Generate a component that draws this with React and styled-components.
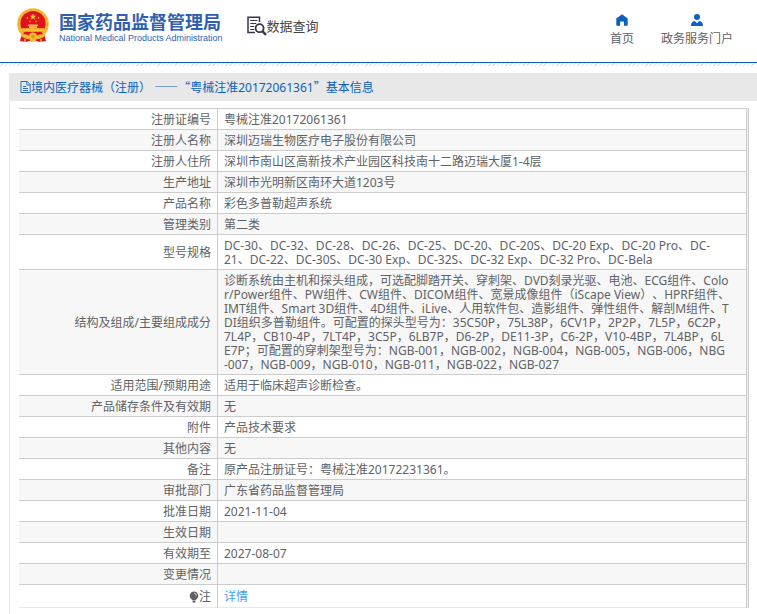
import React from "react";
import styled, { createGlobalStyle } from "styled-components";

const details = [
  { label: "注册证编号", value: "粤械注准20172061361" },
  { label: "注册人名称", value: "深圳迈瑞生物医疗电子股份有限公司" },
  {
    label: "注册人住所",
    value: "深圳市南山区高新技术产业园区科技南十二路迈瑞大厦1-4层",
  },
  { label: "生产地址", value: "深圳市光明新区南环大道1203号" },
  { label: "产品名称", value: "彩色多普勒超声系统" },
  { label: "管理类别", value: "第二类" },
  {
    label: "型号规格",
    value: [
      "DC-30、DC-32、DC-28、DC-26、DC-25、DC-20、DC-20S、DC-20 Exp、DC-20 Pro、DC-",
      "21、DC-22、DC-30S、DC-30 Exp、DC-32S、DC-32 Exp、DC-32 Pro、DC-Bela",
    ].join("\n"),
  },
  {
    label: "结构及组成/主要组成成分",
    value: [
      "诊断系统由主机和探头组成，可选配脚踏开关、穿刺架、DVD刻录光驱、电池、ECG组件、Colo",
      "r/Power组件、PW组件、CW组件、DICOM组件、宽景成像组件（iScape View）、HPRF组件、",
      "IMT组件、Smart 3D组件、4D组件、iLive、人用软件包、造影组件、弹性组件、解剖M组件、T",
      "DI组织多普勒组件。可配置的探头型号为：35C50P，75L38P，6CV1P，2P2P，7L5P，6C2P，",
      "7L4P，CB10-4P，7LT4P，3C5P，6LB7P，D6-2P，DE11-3P，C6-2P，V10-4BP，7L4BP，6L",
      "E7P；可配置的穿刺架型号为：NGB-001，NGB-002，NGB-004，NGB-005，NGB-006，NBG",
      "-007，NGB-009，NGB-010，NGB-011，NGB-022，NGB-027",
    ].join("\n"),
  },
  { label: "适用范围/预期用途", value: "适用于临床超声诊断检查。" },
  { label: "产品储存条件及有效期", value: "无" },
  { label: "附件", value: "产品技术要求" },
  { label: "其他内容", value: "无" },
  { label: "备注", value: "原产品注册证号：粤械注准20172231361。" },
  { label: "审批部门", value: "广东省药品监督管理局" },
  { label: "批准日期", value: "2021-11-04" },
  { label: "生效日期", value: "" },
  { label: "有效期至", value: "2027-08-07" },
  { label: "变更情况", value: "" },
];

const Emblem = () => (
  <svg width="34" height="36" viewBox="0 0 34 36" aria-hidden="true">
    <path d="M6 25 L28 25 L30 33 L24 34 L17 32 L10 34 L4 33 Z" fill="#d9141b" />
    <circle cx="17" cy="16" r="15.8" fill="#f3bb35" />
    <circle cx="17" cy="16" r="14.4" fill="none" stroke="#e0a01c" strokeWidth="0.8" strokeDasharray="2 2" />
    <circle cx="17" cy="15.5" r="12.6" fill="#e1131a" />
    <path
      d="M17 5.4l.9 2.2 2.3.2-1.8 1.5.6 2.3-2-1.3-2 1.3.6-2.3-1.8-1.5 2.3-.2z"
      fill="#ffc93c"
    />
    <circle cx="11.5" cy="10" r="0.9" fill="#f5a623" />
    <circle cx="22.500" cy="10" r="0.9" fill="#f5a623" />
    <circle cx="14" cy="13.4" r="0.8" fill="#f5a623" />
    <circle cx="20" cy="13.4" r="0.8" fill="#f5a623" />
    <path d="M12.500 16.500h9l1 1.400h-11zM13 18.300h8v1.700h-8z" fill="#ffc93c" />
    <path d="M5.500 20.300h23l-1.500 3.500H7z" fill="#f7c431" />
    <path d="M7.500 25.500h19" stroke="#e1131a" strokeWidth="1.600" />
    <circle cx="17" cy="28.500" r="4" fill="#f3bb35" />
    <circle cx="17" cy="28.500" r="1.600" fill="#d99413" />
    <path d="M5 27q6 4.500 9 2M29 27q-6 4.500-9 2" fill="none" stroke="#f3bb35" strokeWidth="2" />
    <path d="M9 31v3M25 31v3M14 33h6" stroke="#f3bb35" strokeWidth="1.400" />
  </svg>
);

const SearchDocIcon = () => (
  <svg width="20" height="20" viewBox="0 0 20 20" fill="none" stroke="#3a3548" aria-hidden="true">
    <path d="M12.5 6V1.2H1v15.3h7" strokeWidth="1.5" />
    <path d="M3.2 4.5h7.2M3.2 7.5h6M3.2 10.5h4M3.2 13.5h4" strokeWidth="1.2" />
    <circle cx="12.6" cy="12.2" r="4" strokeWidth="1.8" />
    <path d="M15.4 15.2l3.6 3.6" strokeWidth="2.4" />
  </svg>
);

const HomeIcon = () => (
  <svg width="12" height="12" viewBox="0 0 12 12" fill="#0b60c0" aria-hidden="true">
    <path d="M6 .2L.3 4.500V11q0 .8.8.8h3V8q0-.6.6-.6h2.600q.6 0 .6.6v3.800h3q.8 0 .8-.8V4.500z" />
  </svg>
);

const UserIcon = () => (
  <svg width="12" height="12" viewBox="0 0 12 12" fill="#0b60c0" aria-hidden="true">
    <circle cx="6" cy="3.1" r="3" />
    <path d="M0 12q0-4.500 3.800-5L6 9.200 8.200 7Q12 7.500 12 12z" />
  </svg>
);

const FileIcon = () => (
  <svg width="11" height="12" viewBox="0 0 11 12" fill="none" stroke="#0b60c0" aria-hidden="true">
    <path d="M1 .5h6.200l3 3v8H1zM6.800.5V4h3.400M3 5.500h3M3 7.500h5M3 9.500h5" strokeWidth="0.9" />
  </svg>
);

const BulbIcon = () => (
  <svg width="10" height="12" viewBox="0 0 10 12" aria-hidden="true">
    <path d="M5 .5a4.200 4.200 0 0 1 2.500 7.600L6.500 9.400h-3L2.500 8.100A4.200 4.200 0 0 1 5 .5zM3.600 10h2.800v1.400H3.600z" fill="#606266" />
    <path d="M5 2.200a2.600 2.600 0 0 1 2.500 2.500" fill="none" stroke="#fff" strokeWidth="0.700" />
  </svg>
);

const App = () => {
  return (
    <>
      <GlobalStyle />
      <PageStyled lang="zh-CN">
        <HeaderStyled>
          <BrandStyled href="#">
            <Emblem />
            <BrandText>
              <BrandName>国家药品监督管理局</BrandName>
              <BrandSub>National Medical Products Administration</BrandSub>
            </BrandText>
          </BrandStyled>
          <SectionLink href="#">
            <SearchDocIcon />
            数据查询
          </SectionLink>
          <NavStyled>
            <NavLink href="#">
              <HomeIcon />
              首页
            </NavLink>
            <NavLink href="#">
              <UserIcon />
              政务服务门户
            </NavLink>
          </NavStyled>
        </HeaderStyled>
        <Hatch />
        <PanelStyled>
          <PanelTitle>
            <FileIcon />
            <span>
              境内医疗器械（注册） <Wide>——</Wide>
              <Wide>“</Wide>粤械注准20172061361<Wide>”</Wide>基本信息
            </span>
          </PanelTitle>
          <TableFrame>
            <TableStyled>
              <tbody>
                {details.map((item) => (
                  <Row key={item.label}>
                    <Label scope="row">{item.label}</Label>
                    <Value>{item.value}</Value>
                  </Row>
                ))}
                <Row>
                  <Label scope="row" $last>
                    <Note>
                      <BulbIcon />注
                    </Note>
                  </Label>
                  <Value $last>
                    <DetailLink href="#">详情</DetailLink>
                  </Value>
                </Row>
              </tbody>
            </TableStyled>
          </TableFrame>
        </PanelStyled>
      </PageStyled>
    </>
  );
};

const GlobalStyle = createGlobalStyle`
  * {
    box-sizing: border-box;
  }

  body {
    margin: 0;
    background: #fff;
    color: #606266;
    font: 12px/14px "Noto Sans", "Noto Sans CJK SC", sans-serif;
    text-spacing-trim: space-all;
  }

  a {
    text-decoration: none;
  }

  svg {
    flex: none;
  }
`;

const PageStyled = styled.div`
  display: flex;
  flex-direction: column;
  min-height: 100vh;
`;

const HeaderStyled = styled.header`
  display: flex;
  align-items: flex-start;
  height: 63px;
  padding: 8px 24px 0 16px;
  border-bottom: 1px solid #0b60c0;
`;

const BrandStyled = styled.a`
  display: flex;
  gap: 9px;
  color: #2f5fb0;
`;

const BrandText = styled.span`
  display: flex;
  flex-direction: column;
  padding-top: 3px;
  white-space: nowrap;
`;

const BrandName = styled.strong`
  font: bold 18px/20px "Noto Sans CJK SC", sans-serif;
`;

const BrandSub = styled.span`
  font: 9px/14px "Liberation Sans", Arial, sans-serif;
`;

const SectionLink = styled.a`
  display: flex;
  align-items: center;
  margin: 8px 0 0 24px;
  color: #444;
  font-size: 13px;
  line-height: 20px;
  white-space: nowrap;
`;

const NavStyled = styled.nav`
  display: flex;
  gap: 27px;
  margin-left: auto;
  padding-top: 6px;
`;

const NavLink = styled.a`
  display: flex;
  flex-direction: column;
  align-items: center;
  gap: 6px;
  color: #606266;
  white-space: nowrap;
`;

const Hatch = styled.div`
  height: 3px;
  background: repeating-linear-gradient(135deg, #fff 0 2px, #e0e0e0 2px 3px);
`;

const PanelStyled = styled.main`
  flex: 1;
  margin: 7px 0 0 9px;
  border-left: 1px solid #e8e8e8;
`;

const PanelTitle = styled.h1`
  display: flex;
  align-items: center;
  height: 28px;
  margin: 0;
  padding: 0 10px;
  background: #e8e8e8;
  color: #0b60c0;
  font-size: 12px;
  font-weight: normal;
`;

const Wide = styled.span`
  font-family: "Noto Sans CJK SC", sans-serif;
`;

const TableFrame = styled.div`
  margin: 7px 8px 6px 9px;
  padding-right: 1px;
  border-right: 1px solid #ccc;
  background: #eee;
`;

const TableStyled = styled.table`
  width: 100%;
  table-layout: fixed;
  border-spacing: 0;
  border-top: 1px solid #ccc;
  border-right: 1px solid #ccc;
  background: #fff;
`;

const Row = styled.tr`
  &:nth-child(even) {
    background: #f7f7f7;
  }
`;

const Label = styled.th`
  width: 199px;
  padding: ${(props) => (props.$last ? "5px 6px 3px" : "4px 6px 2px")};
  border-right: 1px solid #ccc;
  border-bottom: 1px solid ${(props) => (props.$last ? "#e8e8e8" : "#ccc")};
  font-weight: normal;
  text-align: right;
`;

const Value = styled.td`
  height: 21px;
  padding: ${(props) => (props.$last ? "5px 6px 3px" : "4px 6px 2px")};
  border-bottom: 1px solid ${(props) => (props.$last ? "#e8e8e8" : "#ccc")};
  white-space: pre-line;
  word-break: break-all;
`;

const Note = styled.span`
  display: inline-flex;
  align-items: center;
  vertical-align: top;
`;

const DetailLink = styled.a`
  color: #409eff;
`;

export default App;
